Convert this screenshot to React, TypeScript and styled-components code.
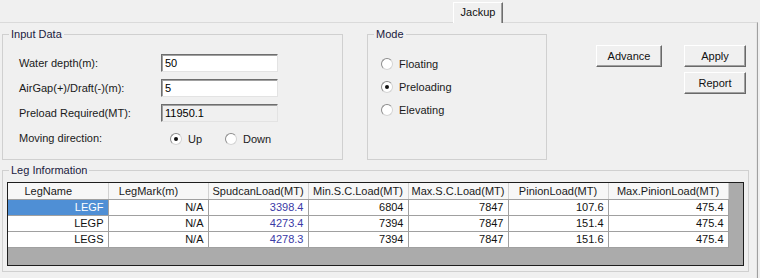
import styled, { createGlobalStyle } from 'styled-components';

const GlobalStyle = createGlobalStyle`
  html, body {
    margin: 0;
    padding: 0;
    background: #f0f0f0;
  }
  body {
    font-family: "Liberation Sans", Arial, sans-serif;
    font-size: 11px;
    color: #111;
  }
`;

const Window = styled.div`
  width: 760px;
  height: 278px;
  background: #f0f0f0;
  overflow: hidden;
`;

const TabStrip = styled.div`
  height: 22px;
  display: flex;
  align-items: flex-end;
  padding-left: 453px;
  box-sizing: border-box;
`;

const Tab = styled.div`
  position: relative;
  z-index: 1;
  width: 50px;
  height: 21px;
  margin-bottom: -1px;
  box-sizing: border-box;
  background: #f0f0f0;
  border-left: 1px solid #ffffff;
  border-top: 1px solid #ffffff;
  border-right: 1px solid #6e6e6e;
  box-shadow: inset -1px 0 0 #a0a0a0;
  display: flex;
  justify-content: center;
  padding-top: 3px;
  line-height: 13px;
`;

const Panel = styled.div`
  width: 758px;
  height: 256px;
  box-sizing: border-box;
  border-top: 1px solid #dadada;
  border-right: 1px solid #a0a0a0;
  box-shadow: inset -1px 0 0 #e6e6e6;
  padding: 4px 0 0 2px;
`;

const TopRow = styled.div`
  display: flex;
  height: 133px;
`;

const Group = styled.fieldset<{ $w: number; $h: number }>`
  margin: 0;
  padding: 0;
  width: ${({ $w }) => $w}px;
  height: ${({ $h }) => $h}px;
  box-sizing: border-box;
  border: 1px solid #d0d0d0;
  min-width: 0;
`;

const Legend = styled.legend`
  margin-left: 6px;
  padding: 0 2px;
  line-height: 14px;
  color: #1a1a40;
`;

const InputBody = styled.div`
  padding: 13px 0 0 16px;
  display: grid;
  grid-template-columns: 142px 117px;
  grid-auto-rows: 18px;
  row-gap: 7px;
  align-items: center;
`;

const Label = styled.span`
  line-height: 14px;
  color: #1a1a1a;
`;

const TextBox = styled.div<{ $disabled?: boolean }>`
  height: 18px;
  box-sizing: border-box;
  background: ${({ $disabled }) => ($disabled ? '#f0f0f0' : '#ffffff')};
  border-top: 1px solid #6e6e6e;
  border-left: 1px solid #6e6e6e;
  border-right: 1px solid #e3e3e3;
  border-bottom: 1px solid #e3e3e3;
  box-shadow: inset 1px 1px 0 #a0a0a0;
  padding-left: 3px;
  line-height: 16px;
  color: #000;
`;

const DirectionRow = styled.div`
  display: flex;
  align-items: center;
  gap: 23px;
  padding: 2px 0 0 9px;
`;

const RadioItem = styled.label`
  display: flex;
  align-items: center;
  gap: 6px;
  line-height: 14px;
  color: #1a1a1a;
`;

const RadioCircle = styled.span<{ $checked?: boolean }>`
  width: 12px;
  height: 12px;
  box-sizing: border-box;
  border-radius: 50%;
  border: 1px solid #d4d4d4;
  border-top-color: #8c8c8c;
  border-left-color: #8c8c8c;
  background: #fff;
  display: flex;
  align-items: center;
  justify-content: center;

  &::after {
    content: '';
    width: 4px;
    height: 4px;
    border-radius: 50%;
    background: ${({ $checked }) => ($checked ? '#111' : 'transparent')};
  }
`;

const ModeGroupWrap = styled.div`
  margin-left: 24px;
`;

const ModeBody = styled.div`
  padding: 16px 0 0 13px;
  display: flex;
  flex-direction: column;
  gap: 9px;
`;

const ButtonArea = styled.div`
  display: flex;
  gap: 22px;
  margin: 18px 0 0 49px;
  align-items: flex-start;
`;

const ButtonColumn = styled.div`
  display: flex;
  flex-direction: column;
  gap: 5px;
`;

const Button = styled.button<{ $w: number }>`
  width: ${({ $w }) => $w}px;
  height: 22px;
  padding: 0;
  box-sizing: border-box;
  font: inherit;
  color: #111;
  background: #f0f0f0;
  border-top: 1px solid #ffffff;
  border-left: 1px solid #ffffff;
  border-right: 1px solid #696969;
  border-bottom: 1px solid #696969;
  box-shadow: inset -1px -1px 0 #a0a0a0;
`;

const LegGroupWrap = styled.div`
  margin-top: 3px;
`;

const LegBody = styled.div`
  padding: 5px 0 0 4px;
`;

const Grid = styled.div`
  width: 737px;
  height: 84px;
  box-sizing: border-box;
  border: 1px solid #1e1e1e;
  background: #ababab;
`;

const Table = styled.table`
  border-collapse: collapse;
  table-layout: fixed;
  width: 720px;
`;

const HeadCell = styled.th<{ $shift?: boolean }>`
  height: 16px;
  padding: 0 ${({ $shift }) => ($shift ? '19px' : '0')} 0 0;
  box-sizing: border-box;
  font-weight: normal;
  text-align: center;
  background: #f7f7f7;
  border-right: 1px solid #d2d2d2;
  border-bottom: 1px solid #a0a0a0;
  line-height: 14px;
  color: #1a1a1a;
  white-space: nowrap;
  overflow: hidden;
`;

const Cell = styled.td<{ $selected?: boolean; $blue?: boolean }>`
  height: 16px;
  padding: 0 4px 0 0;
  box-sizing: border-box;
  text-align: right;
  line-height: 15px;
  background: ${({ $selected }) => ($selected ? '#4f8fd5' : '#ffffff')};
  color: ${({ $selected, $blue }) => ($selected ? '#ffffff' : $blue ? '#3a3aa6' : '#111')};
  border-right: 1px solid #a0a0a0;
  border-bottom: 1px solid #a0a0a0;
`;

const columns = [
  { title: 'LegName', width: 100, shift: true },
  { title: 'LegMark(m)', width: 100, shift: true },
  { title: 'SpudcanLoad(MT)', width: 100 },
  { title: 'Min.S.C.Load(MT)', width: 100 },
  { title: 'Max.S.C.Load(MT)', width: 100 },
  { title: 'PinionLoad(MT)', width: 100 },
  { title: 'Max.PinionLoad(MT)', width: 120 },
];

const rows = [
  ['LEGF', 'N/A', '3398.4', '6804', '7847', '107.6', '475.4'],
  ['LEGP', 'N/A', '4273.4', '7394', '7847', '151.4', '475.4'],
  ['LEGS', 'N/A', '4278.3', '7394', '7847', '151.6', '475.4'],
];

const Radio = ({ label, checked }: { label: string; checked?: boolean }) => (
  <RadioItem>
    <RadioCircle $checked={checked} />
    {label}
  </RadioItem>
);

const App = () => {
  return (
    <Window>
      <GlobalStyle />
      <TabStrip>
        <Tab>Jackup</Tab>
      </TabStrip>
      <Panel>
        <TopRow>
          <Group $w={341} $h={133}>
            <Legend>Input Data</Legend>
            <InputBody>
              <Label>Water depth(m):</Label>
              <TextBox>50</TextBox>
              <Label>AirGap(+)/Draft(-)(m):</Label>
              <TextBox>5</TextBox>
              <Label>Preload Required(MT):</Label>
              <TextBox $disabled>11950.1</TextBox>
              <Label>Moving direction:</Label>
              <DirectionRow>
                <Radio label="Up" checked />
                <Radio label="Down" />
              </DirectionRow>
            </InputBody>
          </Group>

          <ModeGroupWrap>
            <Group $w={180} $h={133}>
              <Legend>Mode</Legend>
              <ModeBody>
                <Radio label="Floating" />
                <Radio label="Preloading" checked />
                <Radio label="Elevating" />
              </ModeBody>
            </Group>
          </ModeGroupWrap>

          <ButtonArea>
            <Button $w={66}>Advance</Button>
            <ButtonColumn>
              <Button $w={62}>Apply</Button>
              <Button $w={62}>Report</Button>
            </ButtonColumn>
          </ButtonArea>
        </TopRow>

        <LegGroupWrap>
          <Group $w={747} $h={109}>
            <Legend>Leg Information</Legend>
            <LegBody>
              <Grid>
                <Table>
                  <colgroup>
                    {columns.map((c) => (
                      <col key={c.title} style={{ width: c.width }} />
                    ))}
                  </colgroup>
                  <thead>
                    <tr>
                      {columns.map((c) => (
                        <HeadCell key={c.title} $shift={c.shift}>
                          {c.title}
                        </HeadCell>
                      ))}
                    </tr>
                  </thead>
                  <tbody>
                    {rows.map((r, i) => (
                      <tr key={r[0]}>
                        {r.map((v, j) => (
                          <Cell key={j} $selected={i === 0 && j === 0} $blue={j === 2}>
                            {v}
                          </Cell>
                        ))}
                      </tr>
                    ))}
                  </tbody>
                </Table>
              </Grid>
            </LegBody>
          </Group>
        </LegGroupWrap>
      </Panel>
    </Window>
  );
};

export default App;
